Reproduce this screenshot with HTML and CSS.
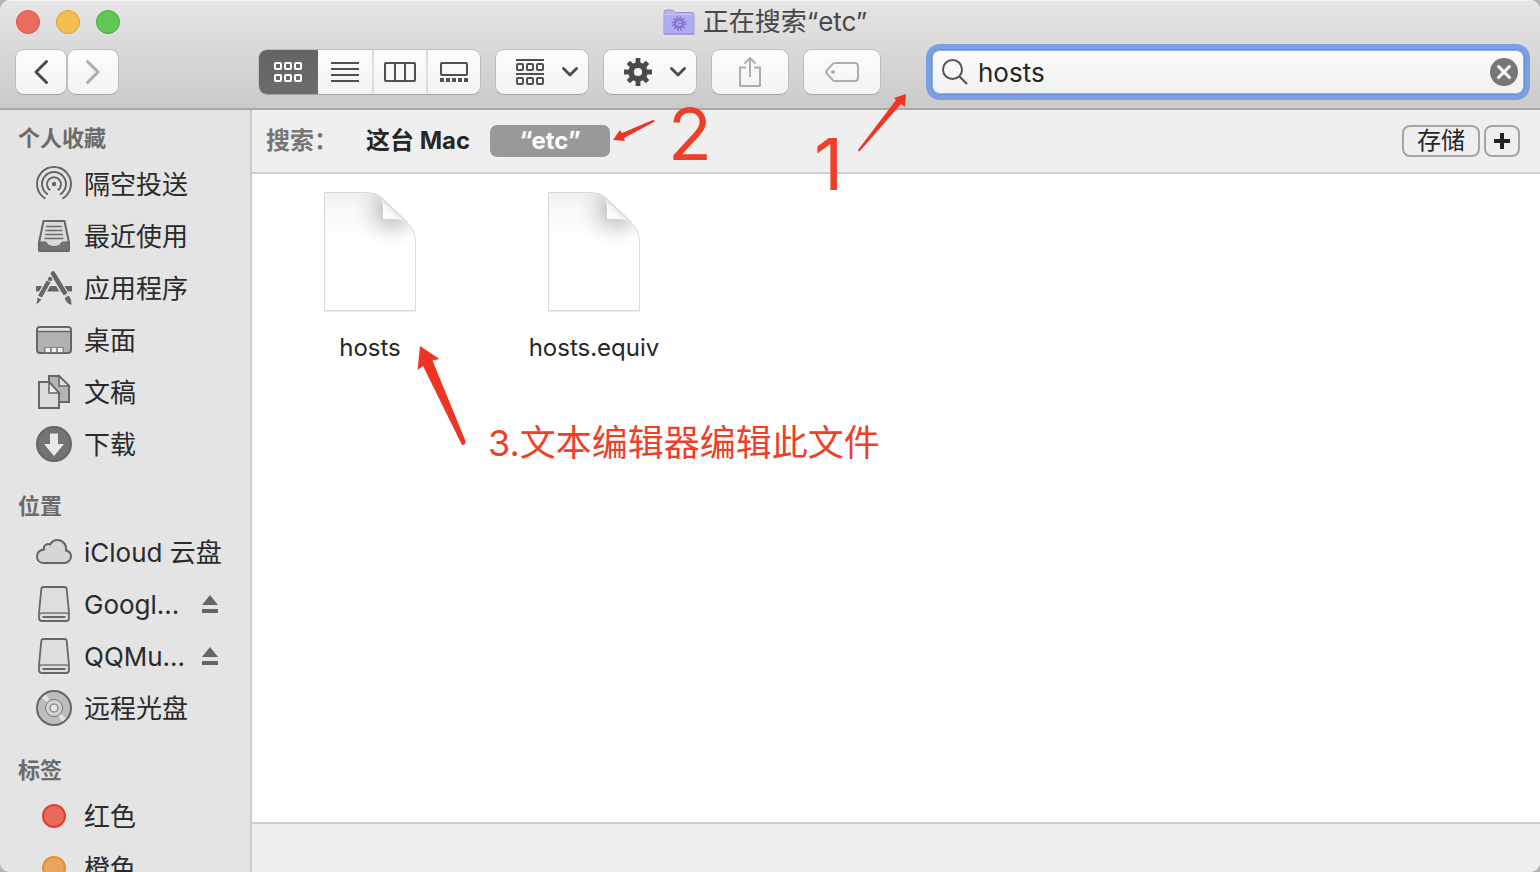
FILE: index.html
```html
<!DOCTYPE html>
<html lang="zh-CN">
<head>
<meta charset="utf-8">
<title>正在搜索“etc”</title>
<link rel="stylesheet" href="styles.css">
</head>
<body>
<div class="window">
  <header class="titlebar">
    <div class="title-row">
      <div class="lights">
        <button class="light light-close" aria-label="关闭"></button>
        <button class="light light-min" aria-label="最小化"></button>
        <button class="light light-zoom" aria-label="缩放"></button>
      </div>
      <h1 class="title">
        <svg width="32" height="26" viewBox="0 0 32 26" aria-hidden="true">
          <path d="M1 3.500Q1 1 3 1H9Q10.500 1 11.500 2.500L12.500 3.500H29Q31 3.500 31 5.500V25H1Z" fill="#b7b1ee" stroke="#9d96dc"/>
          <path d="M1.500 6H30.500V24H1.500Z" fill="#b0aaf3"/>
          <path d="M1 5.500H31" stroke="#cbc6f7"/>
          <circle cx="16" cy="14.500" r="6" fill="none" stroke="#8177d2" stroke-width="2.500" stroke-dasharray="1.500 1.640"/>
          <circle cx="16" cy="14.500" r="4" fill="none" stroke="#8177d2" stroke-width="2.400"/>
          <path d="M16 14.500H20M16 14.500L14 11M16 14.500L14 18" stroke="#8177d2"/>
          <path d="M1 25H31" stroke="#8f87cc"/>
        </svg>
        <span>正在搜索“etc”</span>
      </h1>
    </div>
    <div class="toolbar">
      <div class="nav">
        <button class="btn nav-btn" aria-label="后退"><svg width="16" height="26" viewBox="0 0 16 26"><path d="M13.500 2.500L3 13L13.500 23.500" fill="none" stroke="#4a4a4a" stroke-width="3" stroke-linecap="round" stroke-linejoin="round"/></svg></button>
        <button class="btn nav-btn" aria-label="前进"><svg width="16" height="26" viewBox="0 0 16 26"><path d="M2.500 2.500L13 13L2.500 23.500" fill="none" stroke="#adadad" stroke-width="3" stroke-linecap="round" stroke-linejoin="round"/></svg></button>
      </div>
      <div class="segments">
        <button class="segment segment-on" aria-label="图标">
          <svg width="28" height="20" viewBox="0 0 28 20"><g fill="none" stroke="#fff" stroke-width="2"><rect x="1" y="1" width="6" height="6" rx="1"/><rect x="11" y="1" width="6" height="6" rx="1"/><rect x="21" y="1" width="6" height="6" rx="1"/><rect x="1" y="13" width="6" height="6" rx="1"/><rect x="11" y="13" width="6" height="6" rx="1"/><rect x="21" y="13" width="6" height="6" rx="1"/></g></svg>
        </button>
        <button class="segment" aria-label="列表">
          <svg width="28" height="20" viewBox="0 0 28 20"><path d="M0 1H28M0 7H28M0 13H28M0 19H28" stroke="#505050" stroke-width="2"/></svg>
        </button>
        <button class="segment" aria-label="分栏">
          <svg width="32" height="20" viewBox="0 0 32 20"><path d="M11 1V19M21 1V19" stroke="#505050" stroke-width="2"/><rect x="1" y="1" width="30" height="18" rx="1" fill="none" stroke="#505050" stroke-width="2"/></svg>
        </button>
        <button class="segment" aria-label="画廊">
          <svg width="28" height="20" viewBox="0 0 28 20"><rect x="1" y="1" width="26" height="12" rx="1" fill="none" stroke="#505050" stroke-width="2"/><path d="M0 18H28" stroke="#505050" stroke-width="4" stroke-dasharray="4 2"/></svg>
        </button>
      </div>
      <button class="btn menu-btn" aria-label="分组">
        <svg width="28" height="26" viewBox="0 0 28 26"><path d="M0 1H28M0 15H28" stroke="#505050" stroke-width="2"/><g fill="none" stroke="#505050" stroke-width="2"><rect x="1" y="5" width="6" height="6" rx="1"/><rect x="11" y="5" width="6" height="6" rx="1"/><rect x="21" y="5" width="6" height="6" rx="1"/><rect x="1" y="19" width="6" height="6" rx="1"/><rect x="11" y="19" width="6" height="6" rx="1"/><rect x="21" y="19" width="6" height="6" rx="1"/></g></svg>
        <svg width="16" height="10" viewBox="0 0 16 10"><path d="M1.500 1.500L8 8L14.500 1.500" fill="none" stroke="#4a4a4a" stroke-width="2.800" stroke-linecap="round" stroke-linejoin="round"/></svg>
      </button>
      <button class="btn menu-btn" aria-label="操作">
        <svg width="28" height="28" viewBox="-14 -14 28 28"><g stroke="#4a4a4a" stroke-width="4.800"><path d="M0 -14V-8M0 14V8M-14 0H-8M14 0H8M-9.600 -9.600L-6 -6M9.600 9.600L6 6M-9.600 9.600L-6 6M9.600 -9.600L6 -6"/></g><circle r="6.900" fill="none" stroke="#4a4a4a" stroke-width="5.600"/></svg>
        <svg width="16" height="10" viewBox="0 0 16 10"><path d="M1.500 1.500L8 8L14.500 1.500" fill="none" stroke="#4a4a4a" stroke-width="2.800" stroke-linecap="round" stroke-linejoin="round"/></svg>
      </button>
      <button class="btn tool-btn" aria-label="共享">
        <svg width="22" height="32" viewBox="0 0 22 32"><path d="M7 11.500H1V30H21V11.500H15M11 21V2M5.500 7.500L11 2L16.500 7.500" fill="none" stroke="#adadad" stroke-width="2" stroke-linejoin="round"/></svg>
      </button>
      <button class="btn tool-btn" aria-label="标记">
        <svg width="34" height="20" viewBox="0 0 34 20"><path d="M10 1H30Q33 1 33 4V16Q33 19 30 19H10Q8.500 19 7.500 17.800L1.500 11Q0.700 10 1.500 9L7.500 2.200Q8.500 1 10 1Z" fill="none" stroke="#adadad" stroke-width="2"/><circle cx="8" cy="10" r="2" fill="#adadad"/></svg>
      </button>
      <div class="search">
        <label class="search-label" for="query" aria-label="搜索"><svg width="26" height="26" viewBox="0 0 26 26"><circle cx="10.500" cy="10.500" r="9.500" fill="none" stroke="#555" stroke-width="2"/><path d="M17.500 17.500L25 25" stroke="#555" stroke-width="2.200"/></svg></label>
        <input class="search-input" id="query" type="text" value="hosts">
        <button class="clear" aria-label="清除"><svg width="28" height="28" viewBox="0 0 28 28"><circle cx="14" cy="14" r="14" fill="#777"/><path d="M8.500 8.500L19.500 19.500M19.500 8.500L8.500 19.500" stroke="#fff" stroke-width="3" stroke-linecap="round"/></svg></button>
      </div>
    </div>
  </header>

  <div class="body">
    <nav class="sidebar">
      <section class="group">
        <h2 class="group-title">个人收藏</h2>
        <a class="item" href="#"><svg class="icon" viewBox="0 0 36 36"><g fill="none" stroke="#666" stroke-width="2"><path d="M9.500 31.700A17 17 0 1 1 26.500 31.700"/><path d="M12 27.400A12 12 0 1 1 24 27.400"/><path d="M14.300 23.200A7 7 0 1 1 21.700 23.200"/></g><circle cx="18" cy="17" r="2.200" fill="#666"/></svg><span>隔空投送</span></a>
        <a class="item" href="#"><svg class="icon" viewBox="0 0 36 36"><path d="M7.500 2H28.500L33 23.500V31Q33 32 32 32H4Q3 32 3 31V23.500Z" fill="#dadada" stroke="#666" stroke-width="2" stroke-linejoin="round"/><path d="M3 23H10Q12 27.500 18 27.500T26 23H33V32H3Z" fill="#737373" stroke="#666"/><path d="M10 7.500H26M9.500 11.500H26.500M9 15.500H27M8.500 19.500H27.500" stroke="#6b6b6b" stroke-width="1.600"/></svg><span>最近使用</span></a>
        <a class="item" href="#"><svg class="icon" viewBox="0 0 36 36"><path d="M0 15H36V20.500H0Z" fill="#666"/><g stroke="#e4e4e4" stroke-width="7"><path d="M14 8L4 26M17 3L31 26.500"/></g><path d="M12.600 10.500L4 25.500" stroke="#666" stroke-width="4.400"/><circle cx="14.200" cy="8" r="2.300" fill="#666"/><path d="M17 3L29.200 22.500" stroke="#e4e4e4" stroke-width="6.500"/><path d="M17 2.500L29.200 22.500" stroke="#666" stroke-width="4.600" stroke-linecap="round"/><path d="M1.600 26.500L5.400 28.700L0.500 33.500Z" fill="#666"/><path d="M28.700 27L32.800 24.500Q36.500 29.500 35 34Q30 32 28.700 27Z" fill="#666"/><path d="M27 25.500L33 22" stroke="#e4e4e4" stroke-width="1.200"/></svg><span>应用程序</span></a>
        <a class="item" href="#"><svg class="icon" viewBox="0 0 36 36"><rect x="1" y="4" width="34" height="26" rx="3" fill="#b1b1b1" stroke="#666" stroke-width="2"/><path d="M2 8V7Q2 5 4 5H32Q34 5 34 7V8Z" fill="#e4e4e4"/><path d="M1 8.500H35" stroke="#666" stroke-width="1.600"/><path d="M8 24H28V29.500H8Z" fill="#858585"/><path d="M9.500 25H14V29H9.500ZM15.800 25H20.200V29H15.800ZM22 25H26.500V29H22Z" fill="#f0f0f0"/></svg><span>桌面</span></a>
        <a class="item" href="#"><svg class="icon" viewBox="0 0 36 36"><path d="M13 1H23L33 11V27H13Z" fill="#b4b4b4" stroke="#666" stroke-width="2"/><path d="M23 1V11H33Z" fill="#e0e0e0" stroke="#666" stroke-width="1.600"/><path d="M3 7H13L23 18V33H3Z" fill="#dcdcdc" stroke="#666" stroke-width="2"/><path d="M13 7V18H23Z" fill="#eee" stroke="#666" stroke-width="1.600"/></svg><span>文稿</span></a>
        <a class="item" href="#"><svg class="icon" viewBox="0 0 36 36"><circle cx="18" cy="17" r="17" fill="#737373" stroke="#666" stroke-width="2"/><path d="M14 6.500H22V17H28L18 29L8 17H14Z" fill="#e9e9e9"/></svg><span>下载</span></a>
      </section>
      <section class="group">
        <h2 class="group-title">位置</h2>
        <a class="item" href="#"><svg class="icon" viewBox="0 0 36 36"><path d="M8 28H28C32 28 35 25 35 21.500C35 18 32.500 16 30 15.500C31 9.500 26.500 5 21.500 5C17.500 5 15.500 7 14.200 9.500C11.500 8 7 10 8 14.500C4 15 1 17.500 1 21.500C1 25.500 4 28 8 28Z" fill="#d6d6d6" stroke="#666" stroke-width="2"/></svg><span>iCloud 云盘</span></a>
        <a class="item" href="#"><svg class="icon" viewBox="0 0 36 36"><path d="M7.500 0H28.500Q30.500 0 30.700 2L33 26V31Q33 34 30 34H6Q3 34 3 31V26L5.300 2Q5.500 0 7.500 0Z" fill="#dedede" stroke="#666" stroke-width="1.800"/><path d="M3 29Q3 26 6 26H30Q33 26 33 29" fill="none" stroke="#777" stroke-width="1.600"/><path d="M6.500 30H29.500" stroke="#666" stroke-width="2"/></svg><span class="name">Googl...</span><button class="eject" aria-label="推出"><svg width="16" height="20" viewBox="0 0 16 20"><path d="M8 0L16 10H0ZM0 14H16V18H0Z" fill="#666"/></svg></button></a>
        <a class="item" href="#"><svg class="icon" viewBox="0 0 36 36"><path d="M7.500 0H28.500Q30.500 0 30.700 2L33 26V31Q33 34 30 34H6Q3 34 3 31V26L5.300 2Q5.500 0 7.500 0Z" fill="#dedede" stroke="#666" stroke-width="1.800"/><path d="M3 29Q3 26 6 26H30Q33 26 33 29" fill="none" stroke="#777" stroke-width="1.600"/><path d="M6.500 30H29.500" stroke="#666" stroke-width="2"/></svg><span class="name">QQMu...</span><button class="eject" aria-label="推出"><svg width="16" height="20" viewBox="0 0 16 20"><path d="M8 0L16 10H0ZM0 14H16V18H0Z" fill="#666"/></svg></button></a>
        <a class="item" href="#"><svg class="icon" viewBox="0 0 36 36"><circle cx="18" cy="17" r="17" fill="#bdbdbd"/><path d="M18 17L5 6L9.500 2.500ZM18 17L31 28L26.500 31.500Z" fill="#e2e2e2"/><circle cx="18" cy="17" r="17" fill="none" stroke="#666" stroke-width="2"/><circle cx="18" cy="17" r="8.500" fill="#d4d4d4" stroke="#777" stroke-width="1"/><circle cx="18" cy="17" r="4" fill="#e4e4e4" stroke="#777" stroke-width="1.200"/></svg><span>远程光盘</span></a>
      </section>
      <section class="group">
        <h2 class="group-title">标签</h2>
        <a class="item" href="#"><svg class="icon" viewBox="0 0 36 36"><circle cx="18" cy="17" r="11" fill="#e8695d" stroke="#e2402f" stroke-width="2"/></svg><span>红色</span></a>
        <a class="item" href="#"><svg class="icon" viewBox="0 0 36 36"><circle cx="18" cy="17" r="11" fill="#eba45c" stroke="#e68d2e" stroke-width="2"/></svg><span>橙色</span></a>
      </section>
    </nav>

    <main class="main">
      <div class="scopebar">
        <span class="scope-label">搜索：</span>
        <button class="scope">这台 Mac</button>
        <button class="scope scope-on">“etc”</button>
        <div class="scope-actions">
          <button class="outline save">存储</button>
          <button class="outline plus" aria-label="添加条件"><svg width="16" height="16" viewBox="0 0 16 16"><path d="M8 0V16M0 8H16" stroke="#222" stroke-width="4"/></svg></button>
        </div>
      </div>
      <div class="files">
        <svg class="defs" width="0" height="0" aria-hidden="true">
          <defs>
            <linearGradient id="sheet" x1="0" y1="0" x2="0" y2="1"><stop offset="0" stop-color="#efefef"/><stop offset=".12" stop-color="#f7f7f7"/><stop offset=".4" stop-color="#fff"/></linearGradient>
            <radialGradient id="fold" gradientUnits="userSpaceOnUse" cx="70" cy="20" r="44"><stop offset="0" stop-color="#8a8a8a" stop-opacity=".6"/><stop offset=".3" stop-color="#999" stop-opacity=".36"/><stop offset=".6" stop-color="#aaa" stop-opacity=".12"/><stop offset="1" stop-color="#fff" stop-opacity="0"/></radialGradient>
            <linearGradient id="curl" gradientUnits="userSpaceOnUse" x1="62" y1="29" x2="72" y2="18"><stop offset="0" stop-color="#fff"/><stop offset=".6" stop-color="#f8f8f8"/><stop offset="1" stop-color="#e4e4e4"/></linearGradient>
            <symbol id="page" viewBox="0 0 96 124">
              <path d="M2 4H46L84 33Q94 42 94 55V121.500H2Z" fill="#888" opacity=".3"/>
              <path d="M2.500 2.500H46Q54 2.500 60 8L84 31Q93.500 40 93.500 53V120.500H2.500Z" fill="url(#sheet)" stroke="#dadada"/>
              <path d="M3 3H46Q54 3 60 8L84 31Q93 40 93 53V120H3Z" fill="url(#fold)"/>
              <path d="M56 5Q61 10 61 19V29H71Q79 29 85 32Z" fill="url(#curl)"/>
              <path d="M56 5L85 32" stroke="#d2d2d2"/>
            </symbol>
          </defs>
        </svg>
        <figure class="file"><svg width="96" height="124"><use href="#page"/></svg><figcaption>hosts</figcaption></figure>
        <figure class="file"><svg width="96" height="124"><use href="#page"/></svg><figcaption>hosts.equiv</figcaption></figure>
      </div>
      <footer class="statusbar"></footer>
    </main>
  </div>

  <svg class="arrows" width="920" height="460" viewBox="0 0 920 460" aria-hidden="true">
    <path d="M906 94L905 107L901 104L860 151Q858 152 858 150L896 100L894 98Z"/>
    <path d="M613 140L620 130L622 133L653 120Q655 120 654 122L624 138L625 141Z"/>
    <path d="M420 346L439.500 359L432.500 360.500L465.500 441Q466 445 462 445L423 366L417.500 370Z"/>
  </svg>
  <span class="note note-one">1</span>
  <span class="note note-two">2</span>
  <span class="note note-three">3.文本编辑器编辑此文件</span>
</div>
</body>
</html>
```
FILE: styles.css
```css
* {
  box-sizing: border-box;
}

body {
  margin: 0;
  background: #b4b4b4;
  color: #262626;
  font-family: Inter, "Noto Sans CJK SC", sans-serif;
  font-size: 26px;
}

button {
  margin: 0;
  padding: 0;
  border: 0;
  background: none;
  color: inherit;
  font: inherit;
}

svg {
  display: block;
  flex: none;
}

.window {
  position: relative;
  display: flex;
  flex-direction: column;
  height: 100vh;
  overflow: hidden;
  border-radius: 10px;
  background: #efefef;
}

.titlebar {
  flex: none;
  padding: 0 16px 13px;
  border-bottom: 2px solid #a9a9a9;
  background: linear-gradient(#e6e6e6, #cacaca);
  box-shadow: inset 0 1px #f2f2f2;
}

.title-row {
  display: grid;
  grid-template-columns: 1fr auto 1fr;
  align-items: center;
  height: 44px;
  padding-right: 10px;
}

.lights {
  display: flex;
  gap: 16px;
}

.light {
  width: 24px;
  height: 24px;
  border: 1px solid;
  border-radius: 50%;
}

.light-close {
  border-color: #d9534a;
  background: #ed6a5f;
}

.light-min {
  border-color: #dba03c;
  background: #f5bf50;
}

.light-zoom {
  border-color: #4ba83b;
  background: #62c655;
}

.title {
  display: flex;
  align-items: center;
  gap: 8px;
  margin: 0;
  color: #484848;
  font-size: 26px;
  font-weight: 400;
  line-height: 40px;
}

.toolbar {
  display: flex;
  gap: 14px;
  padding-top: 5px;
}

.nav {
  display: flex;
  margin-right: 125px;
}

.btn,
.segments {
  height: 46px;
  border: 1px solid #bdbdbd;
  border-bottom-color: #a3a3a3;
  border-radius: 9px;
  background: linear-gradient(#fdfdfd, #f2f2f2);
}

.btn {
  display: flex;
  align-items: center;
  justify-content: center;
}

.nav-btn {
  width: 52px;
}

.nav-btn:first-child {
  margin-left: -1px;
}

.segments {
  display: flex;
  overflow: hidden;
}

.segment {
  display: flex;
  align-items: center;
  justify-content: center;
  width: 54px;
  border-left: 2px solid #dedede;
}

.segment-on {
  width: 60px;
  margin: -1px 0 -1px -1px;
  border: 0;
  background: linear-gradient(#636363, #6c6c6c);
}

.segment-on + .segment {
  border-left: 0;
}

.menu-btn {
  gap: 18px;
  width: 94px;
  padding-left: 10px;
}

.tool-btn {
  width: 78px;
}

.search {
  display: flex;
  flex: 1;
  align-items: center;
  height: 44px;
  margin: 1px 0 1px 37px;
  padding: 0 5px 0 9px;
  border: 1px solid #8fb2f0;
  border-radius: 8px;
  background: linear-gradient(#fcfcfc, #f1f1f1);
  box-shadow: 0 0 0 1px #6a8fd6, 0 0 0 6px #7b9fe0;
}

.search-input {
  flex: 1;
  min-width: 0;
  height: 40px;
  margin: 0;
  padding: 0 10px;
  border: 0;
  outline: 0;
  background: none;
  color: #262626;
  font: inherit;
}

.body {
  display: flex;
  flex: 1;
  min-height: 0;
}

.sidebar {
  flex: none;
  width: 252px;
  overflow: hidden;
  padding-top: 7px;
  border-right: 2px solid #cbcbcb;
  background: #e4e4e4;
}

.group + .group {
  margin-top: 14px;
}

.group-title {
  margin: 0;
  padding-left: 18px;
  color: #6b6b6b;
  font-size: 22px;
  font-weight: 700;
  line-height: 42px;
}

.item {
  display: flex;
  align-items: center;
  gap: 12px;
  height: 52px;
  padding: 0 32px 0 36px;
  color: #2a2a2a;
  line-height: 40px;
  text-decoration: none;
  white-space: nowrap;
}

.icon {
  width: 36px;
  height: 36px;
  overflow: visible;
}

.name {
  flex: 1;
}

.main {
  display: flex;
  flex: 1;
  flex-direction: column;
  min-width: 0;
}

.scopebar {
  display: flex;
  flex: none;
  align-items: center;
  height: 64px;
  padding: 0 20px 0 14px;
  border-bottom: 2px solid #d0d0d0;
  font-size: 24px;
  font-weight: 700;
}

.scope-label {
  width: 90px;
  color: #757575;
  line-height: 32px;
}

.scope {
  height: 32px;
  padding: 0 10px;
  border-radius: 7px;
  line-height: 32px;
}

.scope-on {
  width: 120px;
  margin-left: 10px;
  background: #999;
  color: #fff;
}

.scope-actions {
  display: flex;
  gap: 4px;
  margin-left: auto;
}

.outline {
  display: flex;
  align-items: center;
  justify-content: center;
  height: 32px;
  border: 2px solid #a5a5a5;
  border-radius: 8px;
  font-weight: 400;
  line-height: 28px;
}

.save {
  width: 78px;
}

.plus {
  width: 36px;
}

.files {
  display: flex;
  flex: 1;
  padding: 16px 6px;
  background: #fff;
}

.defs {
  position: absolute;
}

.file {
  display: flex;
  flex-direction: column;
  align-items: center;
  gap: 18px;
  width: 224px;
  margin: 0;
  font-size: 24px;
  line-height: 32px;
}

.statusbar {
  flex: none;
  height: 50px;
  border-top: 2px solid #cfcfcf;
  background: #efefef;
}

.arrows {
  position: absolute;
  top: 0;
  left: 0;
  fill: #ee3524;
  pointer-events: none;
}

.note {
  position: absolute;
  color: #ee3f28;
  font-size: 72px;
  line-height: 80px;
}

.note-one {
  top: 124px;
  left: 814px;
}

.note-two {
  top: 94px;
  left: 668px;
}

.note-three {
  top: 418px;
  left: 488px;
  font-size: 36px;
  line-height: 50px;
}
```
